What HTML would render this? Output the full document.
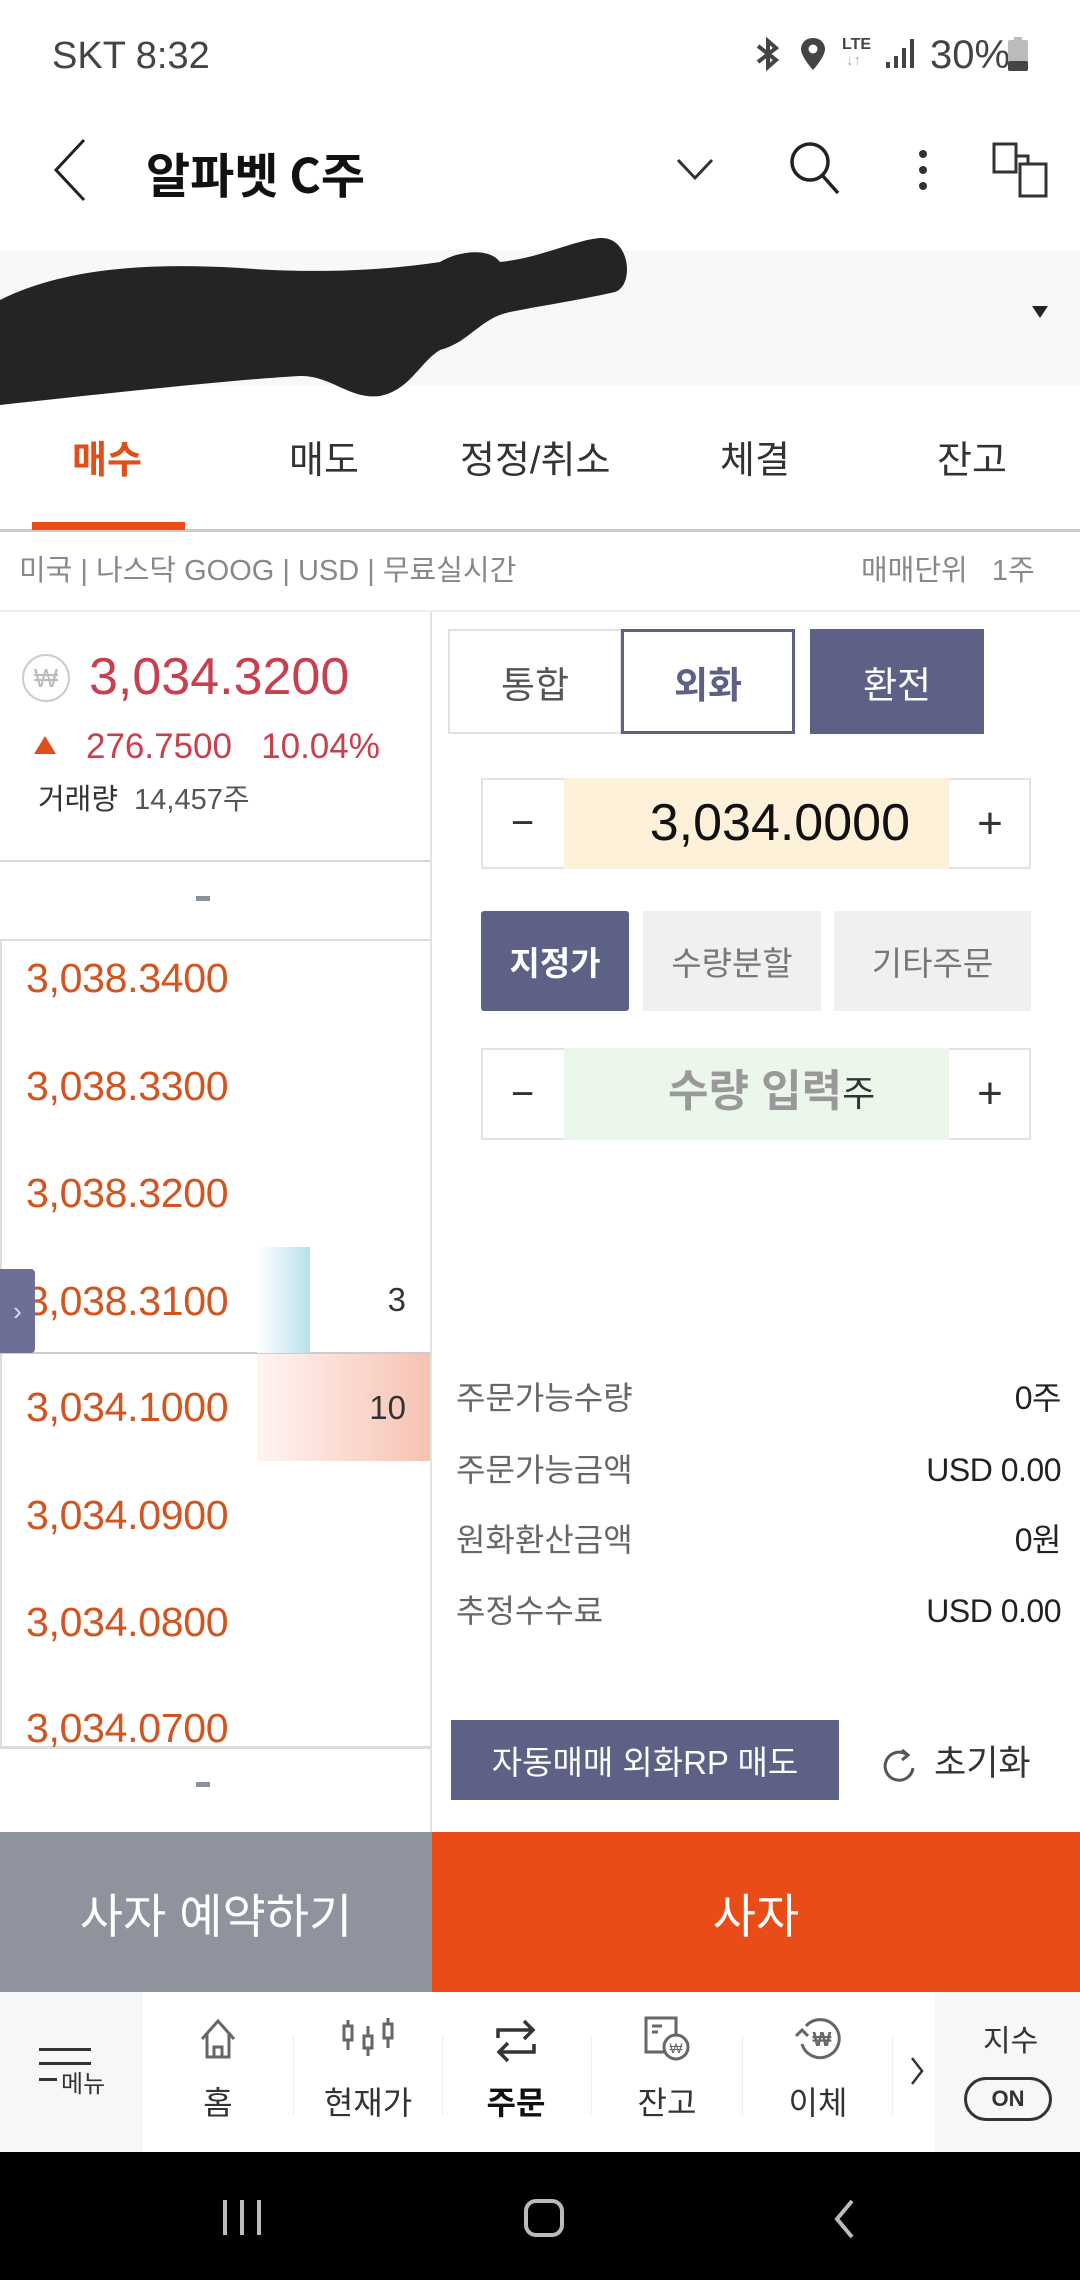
<!DOCTYPE html>
<html><head><meta charset="utf-8">
<style>
*{margin:0;padding:0;box-sizing:border-box}
body{width:1080px;height:2280px;position:relative;background:#fff;font-family:"Liberation Sans","Noto Sans CJK KR",sans-serif;overflow:hidden;color:#222}
.a{position:absolute;white-space:nowrap}
.c{display:flex;align-items:center;justify-content:center}
.ob{position:absolute;left:26px;font-size:41px;color:#d2541e;letter-spacing:-0.3px;line-height:48px}
.info{position:absolute;left:456px;font-size:32px;color:#666;line-height:40px}
.val{position:absolute;right:19px;font-size:32px;color:#222;line-height:40px;letter-spacing:-0.5px}
.nl{position:absolute;font-size:32px;color:#333;line-height:40px;transform:translateX(-50%)}
.ni{position:absolute;transform:translateX(-50%)}
</style></head><body>

<!-- status bar -->
<div class="a" style="left:52px;top:34px;font-size:38px;color:#444;line-height:44px">SKT 8:32</div>
<svg class="a" style="left:750px;top:36px" width="36" height="36" viewBox="0 0 36 36"><path d="M8 10 L26 24 L18 31 L18 5 L26 12 L8 26" fill="none" stroke="#444" stroke-width="4"/></svg>
<svg class="a" style="left:798px;top:36px" width="30" height="36" viewBox="0 0 30 36"><path d="M15 2 C7 2 3 8 3 13 C3 21 15 34 15 34 C15 34 27 21 27 13 C27 8 23 2 15 2 Z" fill="#444"/><circle cx="15" cy="13" r="4.5" fill="#fff"/></svg>
<div class="a" style="left:842px;top:36px;font-size:16px;font-weight:bold;color:#444">LTE</div>
<div class="a" style="left:846px;top:52px;font-size:15px;color:#aaa">↓↑</div>
<svg class="a" style="left:884px;top:36px" width="32" height="34" viewBox="0 0 32 34"><rect x="2" y="26" width="4" height="6" fill="#444"/><rect x="10" y="20" width="4" height="12" fill="#444"/><rect x="18" y="12" width="4" height="20" fill="#444"/><rect x="26" y="3" width="4" height="29" fill="#444"/></svg>
<div class="a" style="left:930px;top:32px;font-size:40px;color:#444;line-height:46px">30%</div>
<svg class="a" style="left:1007px;top:37px" width="22" height="34" viewBox="0 0 22 34"><rect x="7" y="0" width="8" height="4" fill="#bbb"/><rect x="1" y="3" width="20" height="31" rx="2" fill="#bbb"/><rect x="1" y="24" width="20" height="10" rx="2" fill="#444"/></svg>

<!-- header -->
<svg class="a" style="left:50px;top:138px" width="40" height="64" viewBox="0 0 40 64"><path d="M34 2 L6 32 L34 62" fill="none" stroke="#222" stroke-width="3"/></svg>
<div class="a" style="left:146px;top:142px;font-size:48px;font-weight:bold;color:#111;line-height:60px;font-family:'Noto Sans CJK KR','Liberation Sans',sans-serif">알파벳 C주</div>
<svg class="a" style="left:676px;top:157px" width="38" height="24" viewBox="0 0 38 24"><path d="M2 3 L19 21 L36 3" fill="none" stroke="#333" stroke-width="3"/></svg>
<svg class="a" style="left:788px;top:140px" width="56" height="56" viewBox="0 0 56 56"><circle cx="22" cy="22" r="18" fill="none" stroke="#222" stroke-width="3.5"/><path d="M34 35 L50 53" stroke="#222" stroke-width="3.5"/></svg>
<div class="a" style="left:919px;top:150px;width:8px;height:8px;border-radius:50%;background:#333"></div>
<div class="a" style="left:919px;top:166px;width:8px;height:8px;border-radius:50%;background:#333"></div>
<div class="a" style="left:919px;top:182px;width:8px;height:8px;border-radius:50%;background:#333"></div>
<svg class="a" style="left:992px;top:142px" width="58" height="56" viewBox="0 0 58 56"><rect x="2" y="2" width="22" height="28" fill="none" stroke="#333" stroke-width="3"/><path d="M24 14 L36 14 L36 22" fill="none" stroke="#333" stroke-width="3"/><rect x="28" y="22" width="26" height="32" fill="#fff" stroke="#333" stroke-width="3"/></svg>

<!-- account band -->
<div class="a" style="left:0;top:250px;width:1080px;height:135px;background:#f7f8fa"></div>
<svg class="a" style="left:0;top:230px" width="660" height="180" viewBox="0 230 660 180"><path d="M0 300 C60 270 140 262 240 268 C330 275 400 268 440 262 C460 250 490 248 500 262 C540 258 575 240 600 238 C630 236 635 285 615 292 C580 300 545 305 510 312 C480 318 470 342 440 350 C420 362 410 390 380 396 C350 400 330 375 300 376 C230 380 120 392 0 405 Z" fill="#242424"/></svg>
<div class="a" style="left:1032px;top:306px;width:0;height:0;border-left:8px solid transparent;border-right:8px solid transparent;border-top:12px solid #222"></div>

<!-- tabs -->
<div class="a" style="left:72px;top:436px;font-size:38px;font-weight:bold;color:#e04e1a;line-height:50px">매수</div>
<div class="a" style="left:289px;top:436px;font-size:38px;color:#333;line-height:50px">매도</div>
<div class="a" style="left:460px;top:436px;font-size:38px;color:#333;line-height:50px">정정/취소</div>
<div class="a" style="left:720px;top:436px;font-size:38px;color:#333;line-height:50px">체결</div>
<div class="a" style="left:937px;top:436px;font-size:38px;color:#333;line-height:50px">잔고</div>
<div class="a" style="left:0;top:529px;width:1080px;height:3px;background:#ccc"></div>
<div class="a" style="left:32px;top:522px;width:153px;height:8px;background:#e94c17"></div>

<div class="a" style="left:19px;top:553px;font-size:29px;color:#888;line-height:36px">미국 | 나스닥 GOOG | USD | 무료실시간</div>
<div class="a" style="left:861px;top:553px;font-size:29px;color:#888;line-height:36px">매매단위&nbsp;&nbsp;&nbsp;1주</div>
<div class="a" style="left:0;top:610px;width:1080px;height:2px;background:#eee"></div>

<!-- left column -->
<div class="a" style="left:430px;top:612px;width:2px;height:1220px;background:#e3e3e3"></div>
<div class="a c" style="left:22px;top:654px;width:48px;height:48px;border:2px solid #ccc;border-radius:50%;font-size:26px;color:#bbb">₩</div>
<div class="a" style="left:89px;top:648px;font-size:52px;color:#c8404e;line-height:58px;letter-spacing:0px">3,034.3200</div>
<div class="a" style="left:34px;top:736px;width:0;height:0;border-left:11px solid transparent;border-right:11px solid transparent;border-bottom:18px solid #e04e1a"></div>
<div class="a" style="left:86px;top:727px;font-size:35px;color:#c8404e;line-height:40px">276.7500&nbsp;&nbsp;&nbsp;10.04%</div>
<div class="a" style="left:38px;top:782px;font-size:29px;color:#333;line-height:36px">거래량&nbsp;&nbsp;<span style="color:#555">14,457주</span></div>
<div class="a" style="left:0;top:860px;width:430px;height:2px;background:#d8d8d8"></div>
<div class="a" style="left:196px;top:896px;width:14px;height:5px;background:#8a8f9e"></div>
<div class="a" style="left:0;top:939px;width:430px;height:809px;border:2px solid #ddd;border-right:none"></div>
<div class="a" style="left:0;top:1352px;width:430px;height:2px;background:#ccc"></div>
<div class="a" style="left:257px;top:1247px;width:53px;height:106px;background:linear-gradient(to right,#fff,#b7e0ec)"></div>
<div class="a" style="left:257px;top:1354px;width:173px;height:107px;background:linear-gradient(to right,#fff5f2,#f6c2b2)"></div>
<div class="ob" style="top:954px">3,038.3400</div>
<div class="ob" style="top:1062px">3,038.3300</div>
<div class="ob" style="top:1169px">3,038.3200</div>
<div class="ob" style="top:1277px">3,038.3100</div>
<div class="ob" style="top:1383px">3,034.1000</div>
<div class="ob" style="top:1491px">3,034.0900</div>
<div class="ob" style="top:1598px">3,034.0800</div>
<div class="ob" style="top:1704px">3,034.0700</div>
<div class="a" style="right:674px;top:1278px;font-size:33px;color:#333;line-height:44px">3</div>
<div class="a" style="right:674px;top:1386px;font-size:33px;color:#333;line-height:44px">10</div>
<div class="a c" style="left:0;top:1269px;width:35px;height:84px;background:#6c7094;border-radius:0 4px 4px 0;color:#dde;font-size:26px">›</div>
<div class="a" style="left:0;top:1747px;width:430px;height:2px;background:#ddd"></div>
<div class="a" style="left:196px;top:1782px;width:14px;height:5px;background:#8a8f9e"></div>

<!-- right column -->
<div class="a c" style="left:448px;top:629px;width:174px;height:105px;border:2px solid #e2e2e2;font-size:37px;color:#555">통합</div>
<div class="a c" style="left:621px;top:629px;width:174px;height:105px;border:3px solid #5d6186;font-size:37px;font-weight:bold;color:#5d6186">외화</div>
<div class="a c" style="left:810px;top:629px;width:174px;height:105px;background:#5d6186;font-size:37px;color:#fff">환전</div>

<div class="a" style="left:481px;top:778px;width:550px;height:91px;border:2px solid #e2e2e2;background:#fff"></div>
<div class="a" style="left:564px;top:778px;width:385px;height:91px;background:#fdf2d9"></div>
<div class="a c" style="left:481px;top:778px;width:83px;height:91px;font-size:40px;color:#333">−</div>
<div class="a c" style="left:949px;top:778px;width:82px;height:91px;font-size:44px;color:#333">+</div>
<div class="a" style="right:170px;top:793px;font-size:52px;color:#111;line-height:60px;letter-spacing:0px">3,034.0000</div>

<div class="a c" style="left:481px;top:911px;width:148px;height:100px;background:#5d6186;border-radius:3px;font-size:33px;font-weight:bold;color:#fff">지정가</div>
<div class="a c" style="left:643px;top:911px;width:178px;height:100px;background:#f0f0f0;font-size:33px;color:#777">수량분할</div>
<div class="a c" style="left:834px;top:911px;width:197px;height:100px;background:#f0f0f0;font-size:33px;color:#777">기타주문</div>

<div class="a" style="left:481px;top:1048px;width:550px;height:92px;border:2px solid #e2e2e2;background:#fff"></div>
<div class="a" style="left:564px;top:1048px;width:385px;height:92px;background:#ecf7ec"></div>
<div class="a c" style="left:481px;top:1048px;width:83px;height:92px;font-size:40px;color:#333">−</div>
<div class="a c" style="left:949px;top:1048px;width:82px;height:92px;font-size:44px;color:#333">+</div>
<div class="a" style="left:668px;top:1064px;font-size:44px;font-weight:bold;color:#999;line-height:56px">수량 입력<span style="font-size:36px;font-weight:normal;color:#333">주</span></div>

<div class="info" style="top:1378px">주문가능수량</div><div class="val" style="top:1378px">0주</div>
<div class="info" style="top:1450px">주문가능금액</div><div class="val" style="top:1450px">USD 0.00</div>
<div class="info" style="top:1520px">원화환산금액</div><div class="val" style="top:1520px">0원</div>
<div class="info" style="top:1591px">추정수수료</div><div class="val" style="top:1591px">USD 0.00</div>

<div class="a c" style="left:451px;top:1720px;width:388px;height:80px;background:#5d6186;font-size:33px;color:#fff">자동매매 외화RP 매도</div>
<svg class="a" style="left:880px;top:1746px" width="40" height="40" viewBox="0 0 40 40"><path d="M26 8 A14 14 0 1 0 33 22" fill="none" stroke="#555" stroke-width="3"/><path d="M22 4 L28 9 L22 14" fill="none" stroke="#555" stroke-width="3"/></svg>
<div class="a" style="left:934px;top:1742px;font-size:35px;color:#333;line-height:44px">초기화</div>

<!-- action buttons -->
<div class="a c" style="left:0;top:1832px;width:432px;height:160px;background:#8e939e;font-size:47px;color:#fff">사자 예약하기</div>
<div class="a c" style="left:432px;top:1832px;width:648px;height:160px;background:#e94c17;font-size:47px;color:#fff">사자</div>

<!-- bottom nav -->
<div class="a" style="left:0;top:1992px;width:1080px;height:160px;background:#fff"></div>
<div class="a" style="left:0;top:1992px;width:143px;height:160px;background:#f6f7f9"></div>
<div class="a" style="left:935px;top:1992px;width:145px;height:160px;background:#f6f7f9"></div>
<div class="a" style="left:39px;top:2048px;width:52px;height:3px;background:#333"></div>
<div class="a" style="left:39px;top:2062px;width:52px;height:3px;background:#333"></div>
<div class="a" style="left:39px;top:2078px;width:18px;height:3px;background:#333"></div>
<div class="a" style="left:61px;top:2070px;font-size:24px;color:#333;line-height:30px">메뉴</div>

<svg class="ni" style="left:218px;top:2017px" width="40" height="44" viewBox="0 0 40 44"><path d="M4 22 L20 4 L36 22 M9 17 L9 40 L31 40 L31 17 M16 40 L16 30 L24 30 L24 40" fill="none" stroke="#666" stroke-width="3"/></svg>
<svg class="ni" style="left:368px;top:2018px" width="54" height="40" viewBox="0 0 54 40"><g fill="none" stroke="#666" stroke-width="3"><rect x="3" y="8" width="8" height="14"/><path d="M7 2 V8 M7 22 V32"/><rect x="23" y="18" width="8" height="12"/><path d="M27 8 V18 M27 30 V38"/><rect x="43" y="6" width="8" height="14"/><path d="M47 0 V6 M47 20 V30"/></g></svg>
<svg class="ni" style="left:516px;top:2018px" width="44" height="46" viewBox="0 0 44 46"><g fill="none" stroke="#333" stroke-width="3.5"><path d="M4 20 V12 H38 M30 3 L39 12 L30 21"/><path d="M40 26 V34 H6 M14 25 L5 34 L14 43"/></g></svg>
<svg class="ni" style="left:667px;top:2016px" width="50" height="46" viewBox="0 0 50 46"><g fill="none" stroke="#666" stroke-width="3"><path d="M24 36 H4 V2 H34 V18"/><path d="M10 10 H20 M10 16 H16"/><circle cx="34" cy="31" r="12"/><text x="34" y="37" font-size="14" text-anchor="middle" fill="#666" stroke="none" font-family="Liberation Sans">₩</text></g></svg>
<svg class="ni" style="left:818px;top:2014px" width="52" height="48" viewBox="0 0 52 48"><g fill="none" stroke="#666" stroke-width="3"><path d="M10 30 A19 19 0 1 0 14 12"/><path d="M4 22 L10 16 L16 22"/></g><text x="30" y="32" font-size="20" font-weight="bold" text-anchor="middle" fill="#666" font-family="Liberation Sans">₩</text></svg>
<div class="nl" style="left:218px;top:2083px">홈</div>
<div class="nl" style="left:368px;top:2083px">현재가</div>
<div class="nl" style="left:516px;top:2083px;font-weight:bold;color:#111">주문</div>
<div class="nl" style="left:667px;top:2083px">잔고</div>
<div class="nl" style="left:818px;top:2083px">이체</div>
<div class="a" style="left:293px;top:2035px;width:1px;height:80px;background:#eee"></div>
<div class="a" style="left:442px;top:2035px;width:1px;height:80px;background:#eee"></div>
<div class="a" style="left:591px;top:2035px;width:1px;height:80px;background:#eee"></div>
<div class="a" style="left:742px;top:2035px;width:1px;height:80px;background:#eee"></div>
<div class="a" style="left:892px;top:2035px;width:1px;height:80px;background:#eee"></div>
<svg class="a" style="left:910px;top:2056px" width="14" height="30" viewBox="0 0 14 30"><path d="M2 2 L12 15 L2 28" fill="none" stroke="#333" stroke-width="2.5"/></svg>
<div class="a" style="left:983px;top:2022px;font-size:30px;color:#333;line-height:40px">지수</div>
<div class="a c" style="left:964px;top:2077px;width:88px;height:44px;border:3px solid #333;border-radius:22px;font-size:22px;font-weight:bold;color:#333">ON</div>

<!-- system nav -->
<div class="a" style="left:0;top:2152px;width:1080px;height:128px;background:#000"></div>
<div class="a" style="left:223px;top:2200px;width:4px;height:35px;background:#bbb"></div>
<div class="a" style="left:240px;top:2200px;width:4px;height:35px;background:#bbb"></div>
<div class="a" style="left:257px;top:2200px;width:4px;height:35px;background:#bbb"></div>
<div class="a" style="left:524px;top:2199px;width:40px;height:38px;border:4px solid #bbb;border-radius:12px"></div>
<svg class="a" style="left:832px;top:2198px" width="24" height="42" viewBox="0 0 24 42"><path d="M20 3 L5 21 L20 39" fill="none" stroke="#bbb" stroke-width="4"/></svg>
</body></html>
